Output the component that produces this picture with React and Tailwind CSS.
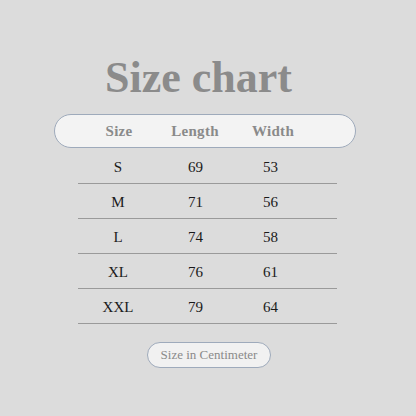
const rows = [
  ["S", "69", "53"],
  ["M", "71", "56"],
  ["L", "74", "58"],
  ["XL", "76", "61"],
  ["XXL", "79", "64"],
];

const serif = { fontFamily: '"Liberation Serif", "DejaVu Serif", serif' };

export default function App() {
  return (
    <div
      className="w-[416px] h-[416px] bg-[#dcdcdc] flex flex-col items-center pt-[56px]"
      style={serif}
    >
      <h1 className="text-[44px] leading-[44px] font-bold text-[#8b8b8b] mr-[19px]">
        Size chart
      </h1>

      <div className="mt-[14px] w-[302px] h-[34px] rounded-full bg-[#f3f3f3] border border-[#9eaabb] flex items-center pl-[24px] mr-[6px]">
        <div className="grid grid-cols-[80px_72px_84px] text-[15px] font-bold text-[#8a8a8a] tracking-[0.3px]">
          <span className="text-center">Size</span>
          <span className="text-center">Length</span>
          <span className="text-center">Width</span>
        </div>
      </div>

      <div className="mt-[1px] w-[259px] mr-[1px] flex flex-col">
        {rows.map((r) => (
          <div
            key={r[0]}
            className="grid grid-cols-[80px_75px_75px] h-[35px] items-center border-b-[1.5px] border-[#9a9a9a] text-[15px] text-[#1a1a1a] pt-[3px]"
          >
            <span className="text-center">{r[0]}</span>
            <span className="text-center">{r[1]}</span>
            <span className="text-center">{r[2]}</span>
          </div>
        ))}
      </div>

      <div className="mt-[18px] ml-[2px] h-[26px] w-[124px] rounded-full bg-[#f1f1f1] border border-[#9eaabb] flex items-center justify-center text-[13px] text-[#8a8a8a]">
        Size in Centimeter
      </div>
    </div>
  );
}
